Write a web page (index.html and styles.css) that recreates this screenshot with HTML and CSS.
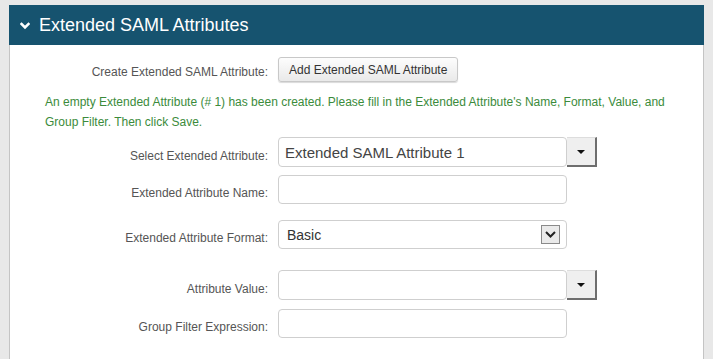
FILE: index.html
```html
<!DOCTYPE html>
<html lang="en">
<head>
  <meta charset="UTF-8">
  <title>Extended SAML Attributes</title>
  <link rel="stylesheet" href="styles.css">
</head>
<body>
  <div class="panel">
    <div class="panel-head">
      <svg class="chevron" width="10" height="8" viewBox="0 0 10 8">
        <path d="M1.5 2 L5 5.5 L8.5 2" fill="none" stroke="#fff" stroke-width="2.6" stroke-linecap="square"/>
      </svg>
      <span>Extended SAML Attributes</span>
    </div>
    <div class="panel-body">
      <div class="row row-create">
        <label>Create Extended SAML Attribute:</label>
        <button class="btn">Add Extended SAML Attribute</button>
      </div>
      <p class="msg">An empty Extended Attribute (# 1) has been created. Please fill in the Extended Attribute's Name, Format, Value, and Group Filter. Then click Save.</p>

      <div class="row row-select">
        <label>Select Extended Attribute:</label>
        <div class="combo">
          <input class="field" type="text" value="Extended SAML Attribute 1">
          <span class="drop"><i class="caret"></i></span>
        </div>
      </div>

      <div class="row row-name">
        <label>Extended Attribute Name:</label>
        <input class="field" type="text">
      </div>

      <div class="row row-format">
        <label>Extended Attribute Format:</label>
        <div class="fake-select">
          <span>Basic</span>
          <span class="arrow-box">
            <svg width="11" height="7" viewBox="0 0 11 7"><path d="M1 1 L5.5 5.5 L10 1" fill="none" stroke="#222" stroke-width="2"/></svg>
          </span>
        </div>
      </div>

      <div class="row row-value">
        <label>Attribute Value:</label>
        <div class="combo">
          <input class="field" type="text">
          <span class="drop"><i class="caret"></i></span>
        </div>
      </div>

      <div class="row row-group">
        <label>Group Filter Expression:</label>
        <input class="field" type="text">
      </div>
    </div>
  </div>
</body>
</html>
```

FILE: styles.css
```css
body {
  margin: 0;
  padding: 5px 9px 0 9px;
  background-color: #e8e8e8;
  font-family: "Liberation Sans", Arial, sans-serif;
  color: #555;
  overflow: hidden;
}
.panel {
  width: 695px;
}
.panel-head {
  height: 40px;
  background-color: #16536f;
  color: #fff;
  font-size: 18px;
  display: flex;
  align-items: center;
  padding-left: 11px;
}
.chevron {
  margin-right: 9px;
  margin-top: 1px;
}
.panel-body {
  background-color: #fff;
  border-left: 1px solid #c4c4c4;
  border-right: 1px solid #c4c4c4;
  height: 302px;
  padding-top: 12px;
}
.row {
  display: flex;
  align-items: center;
}
.row label {
  width: 258px;
  text-align: right;
  font-size: 12px;
  padding-top: 7px;
  margin-right: 10px;
}
.row-create label {
  padding-top: 5px;
}
.btn {
  height: 25px;
  padding: 0 10px;
  font-family: inherit;
  font-size: 12px;
  color: #333;
  background: linear-gradient(#fdfdfd, #e9e9e9);
  border: 1px solid #c8c8c8;
  border-radius: 3px;
  box-shadow: 0 1px 1px rgba(0, 0, 0, 0.15);
}
.msg {
  margin: 10px 0 0 35px;
  padding-right: 30px;
  font-size: 12px;
  line-height: 20px;
  color: #3b8b3b;
}
.field {
  box-sizing: border-box;
  width: 289px;
  height: 30px;
  border: 1px solid #cfcfcf;
  border-radius: 4px;
  padding: 0 6px;
  font-family: inherit;
  font-size: 15px;
  color: #444;
  outline: none;
}
.combo {
  display: flex;
}
.drop {
  box-sizing: border-box;
  width: 30px;
  height: 30px;
  background-color: #efefef;
  border-right: 2px solid #6e6e6e;
  border-bottom: 2px solid #6e6e6e;
  border-top: 1px solid #ddd;
  display: flex;
  align-items: center;
  justify-content: center;
}
.caret {
  width: 0;
  height: 0;
  border-left: 4px solid transparent;
  border-right: 4px solid transparent;
  border-top: 4px solid #111;
}
.row-select {
  margin-top: 5px;
}
.row-name {
  margin-top: 8px;
}
.row-name .field,
.row-group .field {
  height: 29px;
}
.row-format {
  margin-top: 16px;
}
.fake-select {
  box-sizing: border-box;
  width: 289px;
  height: 29px;
  border: 1px solid #cfcfcf;
  border-radius: 4px;
  display: flex;
  align-items: center;
  justify-content: space-between;
  padding: 0 6px 0 8px;
  font-size: 14px;
  color: #333;
}
.arrow-box {
  box-sizing: border-box;
  width: 19px;
  height: 19px;
  border: 1px solid #8a8a8a;
  background-color: #eaeaea;
  display: flex;
  align-items: center;
  justify-content: center;
}
.row-value {
  margin-top: 21px;
}
.row-group {
  margin-top: 9px;
}
```
